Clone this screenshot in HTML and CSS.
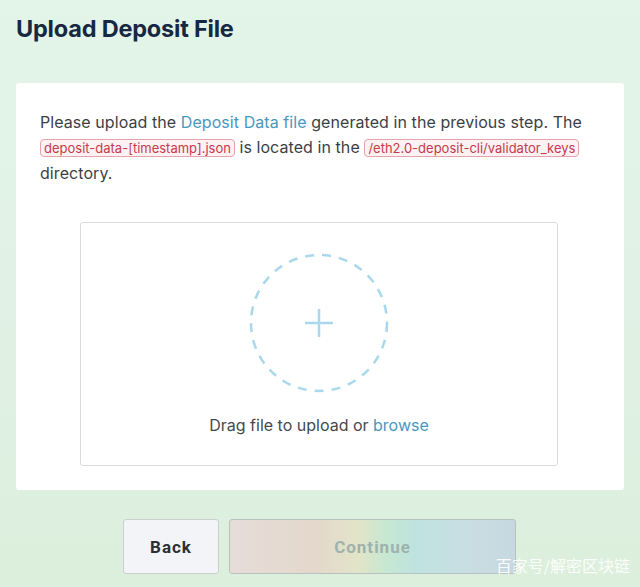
FILE: index.html
```html
<!DOCTYPE html>
<html lang="en">
<head>
    <meta charset="UTF-8">
    <meta name="viewport" content="width=device-width, initial-scale=1.0">
    <title>Upload Deposit File</title>
    <link rel="stylesheet" href="styles.css">
</head>
<body>

    <h1>Upload Deposit File</h1>

    <div class="card">
        <p class="intro">
            Please upload the <a href="#">Deposit Data file</a> generated in the previous step. The
            <code>deposit-data-[timestamp].json</code> is located in the
            <code>/eth2.0-deposit-cli/validator_keys</code> directory.
        </p>

        <!-- Zona para soltar el archivo -->
        <div class="dropzone">
            <div class="circle">
                <svg width="140" height="140" viewBox="0 0 140 140">
                    <circle cx="70" cy="70" r="68" fill="none" stroke="#a9d8ec" stroke-width="2.5" stroke-dasharray="9 8"/>
                    <path d="M70 56 V84 M56 70 H84" stroke="#a9d8ec" stroke-width="2.5" fill="none"/>
                </svg>
            </div>
            <p class="drop-text">Drag file to upload or <a href="#">browse</a></p>
        </div>
    </div>

    <div class="actions">
        <button class="btn btn-back">Back</button>
        <button class="btn btn-continue" disabled>Continue</button>
    </div>

    <div class="watermark">百家号/解密区块链</div>

</body>
</html>
```

FILE: styles.css
```css
body {
    font-family: Inter, "Noto Sans", sans-serif;
    margin: 0;
    padding: 0 16px;
    height: 587px;
    overflow: hidden;
    background: linear-gradient(180deg, #e3f4e8 0%, #e0f1e4 60%, #dcefdc 100%);
    position: relative;
}

h1 {
    margin: 0;
    padding-top: 15px;
    font-size: 23.5px;
    font-weight: 700;
    color: #172842;
    line-height: 28px;
    letter-spacing: -0.2px;
}

.card {
    margin-top: 40px;
    background-color: #fff;
    border-radius: 3px;
    padding: 27px 24px 24px;
    height: 356px;
}

.intro {
    margin: 0;
    font-size: 16px;
    line-height: 25px;
    color: #3b3f45;
    letter-spacing: 0.07px;
}

.intro a,
.drop-text a {
    color: #4a97bd;
    text-decoration: none;
}

code {
    font-family: Inter, "Noto Sans", sans-serif;
    font-size: 13px;
    letter-spacing: 0;
    color: #c8394c;
    background-color: #fdf2f3;
    border: 1px solid #e7a3ab;
    border-radius: 4px;
    padding: 0 3px;
}

.dropzone {
    margin: 36px 42px 0 40px;
    height: 242px;
    border: 1px solid #dcdcdc;
    border-radius: 3px;
    display: flex;
    flex-direction: column;
    align-items: center;
}

.circle {
    margin-top: 30px;
    height: 140px;
}

.drop-text {
    margin: 22px 0 0;
    font-size: 16px;
    color: #444a50;
}

.actions {
    margin-top: 29px;
    padding-left: 107px;
    display: flex;
    gap: 10px;
}

.btn {
    height: 55px;
    border-radius: 3px;
    font-family: Roboto, sans-serif;
    font-size: 17px;
    font-weight: 700;
    letter-spacing: 1px;
}

.btn-back {
    width: 96px;
    background-color: #f2f4f8;
    border: 1px solid #c9d0cd;
    color: #2c2f33;
}

.btn-continue {
    width: 287px;
    border: 1px solid #b7c2c0;
    color: #9fb2ad;
    background: linear-gradient(90deg, #e6dcd8 0%, #e4d8cc 30%, #e2e4c8 45%, #c6e8d2 55%, #bfe2e0 65%, #c8dde2 85%, #c7d8e0 100%);
}

.watermark {
    position: absolute;
    right: 10px;
    bottom: 10px;
    font-family: "Noto Sans CJK SC", sans-serif;
    font-size: 16px;
    color: rgba(255, 255, 255, 0.9);
}
```
